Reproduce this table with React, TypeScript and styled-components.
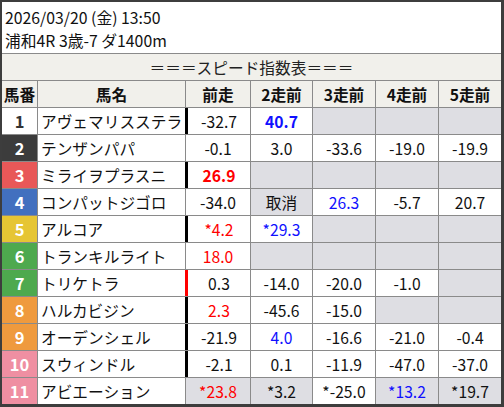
import * as React from "react";
import styled, { createGlobalStyle } from "styled-components";

const GlobalStyle = createGlobalStyle`
  body {
    margin: 0;
    background: #ffffff;
    font-family: "Noto Sans CJK JP", "Noto Sans", sans-serif;
    color: #1a1a1a;
  }
`;

type Tone = "red" | "blue" | undefined;

interface Cell {
  v?: string;
  tone?: Tone;
  bold?: boolean;
  gray?: boolean;
}

interface Horse {
  no: number;
  name: string;
  bar?: "black" | "red";
  cells: Cell[];
}

const E: Cell = { gray: true };

const horses: Horse[] = [
  { no: 1, name: "アヴェマリスステラ", bar: "black", cells: [{ v: "-32.7" }, { v: "40.7", tone: "blue", bold: true }, E, E, E] },
  { no: 2, name: "テンザンパパ", cells: [{ v: "-0.1" }, { v: "3.0" }, { v: "-33.6" }, { v: "-19.0" }, { v: "-19.9" }] },
  { no: 3, name: "ミライヲプラスニ", bar: "black", cells: [{ v: "26.9", tone: "red", bold: true }, E, E, E, E] },
  { no: 4, name: "コンパットジゴロ", cells: [{ v: "-34.0" }, { v: "取消", gray: true }, { v: "26.3", tone: "blue" }, { v: "-5.7" }, { v: "20.7" }] },
  { no: 5, name: "アルコア", bar: "black", cells: [{ v: "*4.2", tone: "red" }, { v: "*29.3", tone: "blue" }, E, E, E] },
  { no: 6, name: "トランキルライト", cells: [{ v: "18.0", tone: "red" }, E, E, E, E] },
  { no: 7, name: "トリケトラ", bar: "red", cells: [{ v: "0.3" }, { v: "-14.0" }, { v: "-20.0" }, { v: "-1.0" }, E] },
  { no: 8, name: "ハルカビジン", bar: "black", cells: [{ v: "2.3", tone: "red" }, { v: "-45.6" }, { v: "-15.0" }, E, E] },
  { no: 9, name: "オーデンシェル", bar: "black", cells: [{ v: "-21.9" }, { v: "4.0", tone: "blue" }, { v: "-16.6" }, { v: "-21.0" }, { v: "-0.4" }] },
  { no: 10, name: "スウィンドル", bar: "black", cells: [{ v: "-2.1" }, { v: "0.1" }, { v: "-11.9" }, { v: "-47.0" }, { v: "-37.0" }] },
  { no: 11, name: "アビエーション", cells: [{ v: "*23.8", tone: "red", gray: true }, { v: "*3.2", gray: true }, { v: "*-25.0" }, { v: "*13.2", tone: "blue", gray: true }, { v: "*19.7", gray: true }] },
];

const frameColors: Record<number, [string, string]> = {
  1: ["#ffffff", "#333333"],
  2: ["#3c3c3c", "#ffffff"],
  3: ["#e85858", "#ffffff"],
  4: ["#4270bf", "#ffffff"],
  5: ["#e6c534", "#ffffff"],
  6: ["#4ea94e", "#ffffff"],
  7: ["#4ea94e", "#ffffff"],
  8: ["#ef9a3e", "#ffffff"],
  9: ["#ef9a3e", "#ffffff"],
  10: ["#ef8fa2", "#ffffff"],
  11: ["#ef8fa2", "#ffffff"],
};

const Frame = styled.div`
  width: 499px;
  border-style: solid;
  border-color: #3d3d3d;
  border-width: 2px 3px 3px 2px;
  background: #ffffff;
`;

const RaceInfo = styled.div`
  height: 47px;
  padding: 4px 0 0 3px;
  border-bottom: 1px solid #8a8a8a;
  font-size: 15.8px;
  line-height: 23px;
  color: #111111;
`;

const Grid = styled.div`
  display: grid;
  grid-template-columns: 35px 147px 64px 61px 62px 62px 62px;
  grid-auto-rows: 26px;
  gap: 1px;
  background: #8a8a8a;
  font-size: 15.7px;
`;

const Title = styled.div`
  grid-column: 1 / -1;
  background: #f1f0eb;
  display: flex;
  align-items: center;
  justify-content: center;
  color: #222222;
`;

const Head = styled.div`
  background: #f1f0eb;
  display: flex;
  align-items: center;
  justify-content: center;
  font-weight: 700;
  color: #111111;
`;

const Num = styled.div<{ $bg: string; $fg: string }>`
  background: ${(p) => p.$bg};
  color: ${(p) => p.$fg};
  display: flex;
  align-items: center;
  justify-content: center;
  font-weight: 700;
  font-size: 16.5px;
`;

const Name = styled.div`
  background: #ffffff;
  display: flex;
  align-items: center;
  padding-left: 3px;
  white-space: nowrap;
  overflow: hidden;
  color: #111111;
`;

const Value = styled.div<{ $tone?: Tone; $bold?: boolean; $gray?: boolean; $bar?: string }>`
  background: ${(p) => (p.$gray ? "#dedee3" : "#ffffff")};
  color: ${(p) => (p.$tone === "red" ? "#ff0000" : p.$tone === "blue" ? "#1010ff" : "#111111")};
  font-weight: ${(p) => (p.$bold ? 700 : 400)};
  display: flex;
  align-items: center;
  justify-content: center;
  ${(p) => (p.$bar ? `margin-left: -1px; border-left: 3px solid ${p.$bar};` : "")}
`;

export default function App() {
  const heads = ["前走", "2走前", "3走前", "4走前", "5走前"];
  return (
    <>
      <GlobalStyle />
      <Frame>
        <RaceInfo>
          2026/03/20 (金) 13:50
          <br />
          浦和4R 3歳-7 ダ1400m
        </RaceInfo>
        <Grid>
          <Title>＝＝＝スピード指数表＝＝＝</Title>
          <Head>馬番</Head>
          <Head>馬名</Head>
          {heads.map((h) => (
            <Head key={h}>{h}</Head>
          ))}
          {horses.map((h) => (
            <React.Fragment key={h.no}>
              <Num $bg={frameColors[h.no][0]} $fg={frameColors[h.no][1]}>
                {h.no}
              </Num>
              <Name>{h.name}</Name>
              {h.cells.map((c, i) => (
                <Value
                  key={i}
                  $tone={c.tone}
                  $bold={c.bold}
                  $gray={c.gray}
                  $bar={i === 0 && h.bar ? (h.bar === "red" ? "#ff0000" : "#000000") : undefined}
                >
                  {c.v}
                </Value>
              ))}
            </React.Fragment>
          ))}
        </Grid>
      </Frame>
    </>
  );
}
